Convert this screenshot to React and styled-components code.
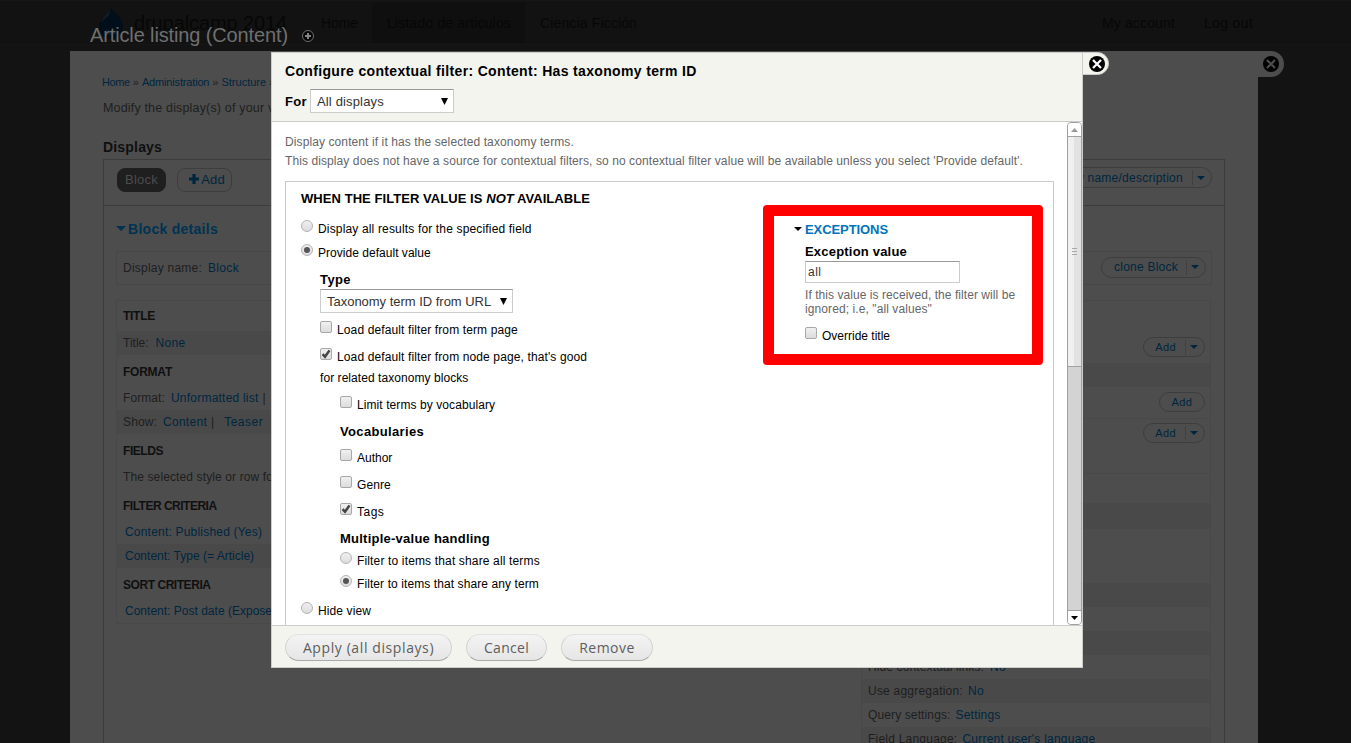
import React from 'react';
import styled, { createGlobalStyle } from 'styled-components';

const Global = createGlobalStyle`
  * { box-sizing: border-box; }
  body { margin: 0; background: #131313; font-family: "Liberation Sans", Arial, sans-serif; font-size: 12px; }
  svg { display: block; flex: none; }
`;

const Stage = styled.div`
  position: relative;
  width: 1351px;
  height: 743px;
  overflow: hidden;
  background: #131313;
`;

const Text = styled.span`
  flex: none;
  white-space: pre;
  font-size: ${p => p.$size || 12}px;
  font-weight: ${p => (p.$bold ? 'bold' : 'normal')};
  letter-spacing: ${p => p.$ls || 0}px;
  color: ${p => p.$color || 'inherit'};
  margin-left: ${p => p.$ml || 0}px;
`;

const Line = styled.div`
  display: flex;
  align-items: center;
  height: ${p => p.$h}px;
  margin-top: ${p => p.$mt || 0}px;
  padding-left: ${p => p.$pl || 0}px;
`;

/* Site navigation */
const SiteHeader = styled.header`
  display: flex;
  align-items: center;
  height: 45px;
  padding: 2px 98px 1px 98px;
  background: #121212;
  border-top: 1px solid #161616;
  border-bottom: 1px solid #161616;
  color: #070707;
`;
const Brand = styled.div`
  display: flex;
  align-items: center;
  width: 208px;
`;
const NavItem = styled.a`
  display: flex;
  align-items: center;
  height: 40px;
  padding: 0 15px;
  background: ${p => (p.$active ? '#0f0f0f' : 'transparent')};
  width: ${p => p.$w}px;
`;
const NavRight = styled.div`
  margin-left: auto;
  display: flex;
`;

/* Administration overlay */
const OverlayTitle = styled.div`
  position: absolute;
  top: 23px;
  left: 90px;
  height: 24px;
  display: flex;
  align-items: center;
  color: #6f6f6f;
`;
const AdminPanel = styled.section`
  position: absolute;
  top: 51px;
  left: 70px;
  width: 1188px;
  height: 700px;
  padding: 18px 33px 0;
  background: #4d4d4d;
  color: #1e1e1e;
`;
const CloseTab = styled.div`
  position: absolute;
  top: ${p => p.$top}px;
  left: 100%;
  width: ${p => p.$w}px;
  height: ${p => p.$h}px;
  padding: ${p => p.$pad};
  background: ${p => p.$bg};
  border-radius: 0 13px 13px 0;
  border: ${p => (p.$line ? `1px solid ${p.$line}` : '0')};
`;
const DisplayBox = styled.div`
  width: 1122px;
  height: 600px;
  margin-top: 2px;
  border: 1px solid #3c3c3c;
`;
const TabsRow = styled.div`
  display: flex;
  align-items: flex-start;
  height: 46px;
  padding: 8px 12px 0 13px;
  border-bottom: 1px solid #3c3c3c;
`;
const Tab = styled.div`
  display: flex;
  align-items: center;
  justify-content: center;
  gap: 2px;
  width: ${p => p.$w}px;
  height: 24px;
  padding: ${p => (p.$active ? '0 0 1px' : '0 0 2px 5px')};
  margin-right: 11px;
  border-radius: 8px;
  border: 1px solid ${p => (p.$active ? '#1f1f1f' : '#3d3d3d')};
  background: ${p => (p.$active ? '#1f1f1f' : 'transparent')};
  color: ${p => (p.$active ? '#4d4d4d' : '#00263f')};
`;
const Pill = styled.div`
  display: flex;
  align-items: center;
  justify-content: ${p => (p.$split ? 'flex-end' : 'center')};
  width: ${p => p.$w}px;
  height: ${p => p.$h || 20}px;
  margin: ${p => p.$m || '0'};
  margin-left: auto;
  padding-right: ${p => (p.$split ? 6 : 0)}px;
  border: 1px solid #3d3d3d;
  border-radius: 11px;
  color: #00263f;
`;
const Divider = styled.i`
  width: 1px;
  height: 15px;
  margin: 0 4px 0 ${p => p.$ml || 9}px;
  background: #414141;
`;
const NameRow = styled.div`
  display: flex;
  align-items: center;
  height: 34px;
  margin: 0 12px;
  padding: 0 5px 0 6px;
  border: 1px solid #474747;
`;
const Columns = styled.div`
  display: flex;
  align-items: flex-start;
  justify-content: space-between;
  margin: 15px 13px 0 12px;
`;
const Column = styled.div`
  width: ${p => p.$w}px;
  border: 1px solid #484848;
`;
const Head = styled.h4`
  margin: 0;
  height: ${p => p.$h || 31}px;
  line-height: ${p => (p.$h ? p.$h - 1 : 31)}px;
  padding: ${p => (p.$h ? 1 : 2)}px 0 0 6px;
  font-size: 12px;
  letter-spacing: ${p => p.$ls}px;
  color: #101010;
`;
const Setting = styled.div`
  display: flex;
  align-items: center;
  height: 24px;
  padding-left: ${p => p.$pl || 6}px;
  background: ${p => (p.$odd ? '#494949' : 'transparent')};
`;
const Band = styled.div`
  display: flex;
  align-items: flex-start;
  height: ${p => p.$h}px;
  padding: ${p => p.$pt || 0}px 5px 0 0;
  background: ${p => (p.$odd ? '#494949' : 'transparent')};
  border-bottom: ${p => (p.$rule ? '1px solid #484848' : '0')};
`;

/* Modal */
const Modal = styled.section`
  position: absolute;
  top: 52px;
  left: 271px;
  width: 812px;
  height: 616px;
  display: flex;
  flex-direction: column;
  background: #fff;
  border: 1px solid #ccc;
  color: #000;
`;
const ModalHead = styled.header`
  height: 69px;
  padding-left: 13px;
  background: #f3f4ee;
  border-bottom: 1px solid #ccc;
`;
const ModalBody = styled.div`
  display: flex;
  height: 503px;
  overflow: hidden;
`;
const Content = styled.div`
  width: 782px;
  margin-right: 13px;
  padding: 10px 0 0 13px;
  overflow: hidden;
`;
const ModalFoot = styled.footer`
  display: flex;
  gap: 14px;
  height: 42px;
  padding: 8px 0 0 13px;
  background: #f3f4ee;
  border-top: 1px solid #ccc;
`;
const SelectBox = styled.div`
  display: flex;
  align-items: center;
  justify-content: space-between;
  width: ${p => p.$w}px;
  height: 24px;
  padding: 0 5px 0 6px;
  background: #fff;
  border: 1px solid #ccc;
  border-top-color: #999;
  color: #333;
`;
const ForLabel = styled.div`
  width: 25px;
`;
const Fieldset = styled.div`
  width: 769px;
  height: 600px;
  margin-top: 11px;
  padding-left: 15px;
  border: 1px solid #ccc;
`;
const Split = styled.div`
  display: flex;
`;
const LeftCol = styled.div`
  width: 493px;
`;
const RightCol = styled.div`
  width: 240px;
`;
const Indent = styled.div`
  padding-left: ${p => p.$by}px;
`;
const CheckMark = styled.span`
  flex: none;
  width: 12px;
  height: 12px;
  margin: 0 5px 5px 0;
  border: 1px solid #a8a8a8;
  border-radius: 2px;
  background: linear-gradient(#f0f0f0, #dcdcdc);
`;
const RadioMark = styled(CheckMark)`
  padding: 2px;
  border-color: #b4b4b4;
  border-radius: 50%;
  &::after {
    content: '';
    display: block;
    width: 6px;
    height: 6px;
    border-radius: 50%;
    background: ${p => (p.$on ? '#555' : 'transparent')};
  }
`;
const TextInput = styled.div`
  display: flex;
  align-items: center;
  width: 155px;
  height: 22px;
  margin: 2px 0 5px;
  padding-left: 2px;
  border: 1px solid #ccc;
  border-top-color: #999;
  color: #333;
`;
const Button = styled.button`
  width: ${p => p.$w}px;
  height: 27px;
  padding: 0;
  border: 1px solid #d2d2d2;
  border-top-color: #e2e2e2;
  border-bottom-color: #aaa;
  border-radius: 14px;
  background: linear-gradient(#f3f3f3, #e6e6e6);
  color: #5e5e5e;
  font: 14px "Open Sans", sans-serif;
  letter-spacing: ${p => p.$ls}px;
`;
const Scrollbar = styled.div`
  display: flex;
  flex-direction: column;
  width: 15px;
  height: 503px;
  border: 1px solid #a0a0a0;
  border-radius: 4px;
  background: #d3d3d3;
  overflow: hidden;
`;
const ScrollButton = styled.div`
  display: flex;
  align-items: center;
  justify-content: center;
  height: 14px;
  background: #fff;
  border: 0 solid #a0a0a0;
  border-top-width: ${p => (p.$end ? 1 : 0)}px;
  border-bottom-width: ${p => (p.$end ? 0 : 1)}px;
  margin-top: ${p => (p.$end ? 'auto' : 0)};
`;
const Thumb = styled.div`
  display: flex;
  flex-direction: column;
  align-items: center;
  justify-content: center;
  gap: 2px;
  height: 230px;
  border-bottom: 1px solid #a0a0a0;
  background: linear-gradient(90deg, #f0f0f0 50%, #e2e2e2 50%);
`;
const Grip = styled.i`
  width: 5px;
  height: 1px;
  background: #a8a8a8;
`;
const Highlight = styled.div`
  position: absolute;
  top: 205px;
  left: 763px;
  width: 280px;
  height: 160px;
  border: 11px solid #f00;
  border-radius: 4px;
`;

const LINK = '#00263f';

const Down = ({ w = 8, h = 4, color = '#000' }) => (
  <svg width={w} height={h} viewBox={`0 0 ${w} ${h}`}>
    <path d={`M0 0H${w}L${w / 2} ${h}Z`} fill={color} />
  </svg>
);
const CloseIcon = ({ cross }) => (
  <svg width="16" height="16" viewBox="0 0 16 16">
    <circle cx="8" cy="8" r="8" fill="#000" />
    <path d="M4 4l8 8M12 4l-8 8" stroke={cross} strokeWidth="2.2" />
  </svg>
);
const Check = ({ on, ls, children }) => (
  <>
    <CheckMark>
      {on && (
        <svg width="10" height="10" viewBox="0 0 10 10">
          <path d="M1.600 5.200L4 7.800L8.500 1.400" fill="none" stroke="#444" strokeWidth="2.500" />
        </svg>
      )}
    </CheckMark>
    <Text $ls={ls}>{children}</Text>
  </>
);
const Radio = ({ on, ls, children }) => (
  <>
    <RadioMark $on={on} />
    <Text $ls={ls}>{children}</Text>
  </>
);
const Select = ({ w, ls, children }) => (
  <SelectBox $w={w}>
    <Text $size={13} $ls={ls}>{children}</Text>
    <Down w={7} h={7} />
  </SelectBox>
);
const AddPill = ({ split, m }) => (
  <Pill $w={split ? 62 : 46} $m={m} $split={split}>
    <Text $size={11} $ls={0.4}>Add</Text>
    {split && <><Divider /><Down color={LINK} /></>}
  </Pill>
);

const DrupalDrop = () => (
  <svg width="26" height="31" viewBox="0 0 26 31">
    <path d="M13 0C15 5 25 9 25 18.500C25 26 20 30.500 13 30.500S1 26 1 18.500C1 10 11 7 13 0Z" fill="#000f1a" />
    <path d="M12 2C9 7 4 9 3 15C8 9 12 8 12 2Z" fill="#161d23" />
    <path d="M6 23C9 20 12 22 14 24C17 21 20 21 21 24C20 28 17 26 14 26C11 28 7 28 6 23Z" fill="#0c1a25" />
  </svg>
);

export default function App() {
  return (
    <Stage>
      <Global />
      <SiteHeader>
        <Brand>
          <DrupalDrop />
          <Text $size={20} $ls={-0.1} $ml={10}>drupalcamp 2014</Text>
        </Brand>
        <NavItem $w={66}><Text $size={14} $ls={-0.1}>Home</Text></NavItem>
        <NavItem $w={153} $active><Text $size={14} $ls={0.17}>Listado de articulos</Text></NavItem>
        <NavItem $w={130}><Text $size={14} $ls={0.14}>Ciencia Ficción</Text></NavItem>
        <NavRight>
          <Text $size={14} $ls={0.14}>My account</Text>
          <Text $size={14} $ls={0.33} $ml={29}>Log out</Text>
        </NavRight>
      </SiteHeader>

      <AdminPanel>
        <CloseTab $top={0} $w={26} $h={26} $pad="5px 0 0 5px" $bg="#4d4d4d"><CloseIcon cross="#4d4d4d" /></CloseTab>
        <Line $h={26}>
          <Text $size={11} $ls={-0.4} $color={LINK} $ml={-1}>Home</Text>
          <Text $size={11} $ml={3}>»</Text>
          <Text $size={11} $ls={-0.16} $color={LINK} $ml={3}>Administration</Text>
          <Text $size={11} $ml={3}>»</Text>
          <Text $size={11} $color={LINK} $ml={3}>Structure</Text>
          <Text $size={11} $ml={3}>»</Text>
        </Line>
        <Line $h={23} $mt={1}><Text $size={12.5} $ls={0.17}>Modify the display(s) of your view below</Text></Line>
        <Line $h={21} $mt={17}><Text $size={14} $bold $ls={0.18} $color="#101010">Displays</Text></Line>
        <DisplayBox>
          <TabsRow>
            <Tab $w={49} $active><Text $size={13} $ls={0.24}>Block</Text></Tab>
            <Tab $w={55}>
              <svg width="10" height="10" viewBox="0 0 10 10"><path d="M5 0V10M0 5H10" stroke={LINK} strokeWidth="3.200" /></svg>
              <Text $size={13} $ls={0.1}>Add</Text>
            </Tab>
            <Pill $w={200} $h={21} $split $m="-1px 0 0">
              <Text $ls={0.26}>edit view name/description</Text><Divider /><Down color={LINK} />
            </Pill>
          </TabsRow>
          <Line $h={45} $pl={12}>
            <Down w={10} h={5} color="#003352" />
            <Text $size={14} $bold $ls={0.28} $ml={2} $color="#003352">Block details</Text>
          </Line>
          <NameRow>
            <Text $ls={0.23}>Display name:</Text>
            <Text $ls={0.33} $ml={6} $color={LINK}>Block</Text>
            <Pill $w={105} $h={21} $split $m="-2px 0 0"><Text $ls={0.24}>clone Block</Text><Divider $ml={8} /><Down color={LINK} /></Pill>
          </NameRow>
          <Columns>
            <Column $w={340}>
              <Head $h={30} $ls={-0.27}>TITLE</Head>
              <Setting $odd><Text>Title:</Text><Text $ls={0.33} $ml={7} $color={LINK}>None</Text></Setting>
              <Head $ls={-0.24}>FORMAT</Head>
              <Setting>
                <Text $ls={0.09}>Format:</Text><Text $ls={0.22} $ml={6} $color={LINK}>Unformatted list</Text><Text $ml={4}>|</Text>
              </Setting>
              <Setting $odd>
                <Text $ls={0.13}>Show:</Text><Text $ls={0.28} $ml={6} $color={LINK}>Content</Text><Text $ml={4}>|</Text>
                <Text $ls={0.5} $ml={10} $color={LINK}>Teaser</Text>
              </Setting>
              <Head $ls={-0.45}>FIELDS</Head>
              <Setting><Text $ls={0.12}>The selected style or row format</Text></Setting>
              <Head $ls={-0.5}>FILTER CRITERIA</Head>
              <Setting $pl={8}><Text $ls={0.2} $color={LINK}>Content: Published (Yes)</Text></Setting>
              <Setting $pl={8} $odd><Text $ls={0.01} $color={LINK}>Content: Type (= Article)</Text></Setting>
              <Head $ls={-0.45}>SORT CRITERIA</Head>
              <Setting $pl={8}><Text $ls={0.01} $color={LINK}>Content: Post date (Exposed)</Text></Setting>
            </Column>
            <Column $w={350}>
              <Band $h={62} $pt={36}><AddPill split /></Band>
              <Band $h={24} $odd />
              <Band $h={32} $pt={5} $rule><AddPill /></Band>
              <Band $h={55} $pt={4} $rule><AddPill split /></Band>
              <Band $h={29} />
              <Band $h={26} $odd />
              <Band $h={54} />
              <Band $h={24} $odd />
              <Band $h={24} />
              <Band $h={24} $odd />
              <Setting><Text $ls={0.12}>Hide contextual links:</Text><Text $ls={0.33} $ml={6} $color={LINK}>No</Text></Setting>
              <Setting $odd><Text $ls={0.22}>Use aggregation:</Text><Text $ls={0.33} $ml={5} $color={LINK}>No</Text></Setting>
              <Setting><Text $ls={0.12}>Query settings:</Text><Text $ls={0.21} $ml={5} $color={LINK}>Settings</Text></Setting>
              <Setting $odd><Text $ls={0.22}>Field Language:</Text><Text $ls={0.23} $ml={5} $color={LINK}>Current user's language</Text></Setting>
            </Column>
          </Columns>
        </DisplayBox>
      </AdminPanel>

      <OverlayTitle>
        <Text $size={20} $ls={-0.13}>Article listing (Content)</Text>
        <svg width="28" height="13" viewBox="-13.500 -0.500 28 13">
          <circle cx="6.5" cy="6.500" r="5.500" fill="#050505" stroke="#6f6f6f" />
          <path d="M6.500 3.500V9.500M3.500 6.500H9.500" stroke="#858585" strokeWidth="2" />
        </svg>
      </OverlayTitle>

      <Modal>
        <CloseTab $top={-1} $w={27} $h={23} $pad="3px 0 0 6px" $bg="#f3f4ee" $line="#ccc"><CloseIcon cross="#fff" /></CloseTab>
        <ModalHead>
          <Line $h={36}><Text $size={14} $bold $ls={0.34}>Configure contextual filter: Content: Has taxonomy term ID</Text></Line>
          <Line $h={24}>
            <ForLabel><Text $size={13} $bold $ls={0.25}>For</Text></ForLabel>
            <Select w={144} ls={0.15}>All displays</Select>
          </Line>
        </ModalHead>
        <ModalBody>
          <Content>
            <Line $h={19}><Text $ls={0.1} $color="#666">Display content if it has the selected taxonomy terms.</Text></Line>
            <Line $h={19}>
              <Text $ls={0.09} $color="#666">This display does not have a source for contextual filters, so no contextual filter value will be available unless you select 'Provide default'.</Text>
            </Line>
            <Fieldset>
              <Line $h={32}><Text $size={13} $bold $ls={0.06}>WHEN THE FILTER VALUE IS <em>NOT</em> AVAILABLE</Text></Line>
              <Split>
                <LeftCol>
                  <Line $h={29}><Radio ls={0.16}>Display all results for the specified field</Radio></Line>
                  <Line $h={19}><Radio on ls={0.03}>Provide default value</Radio></Line>
                  <Indent $by={19}>
                    <Line $h={19} $mt={8}><Text $size={13} $bold $ls={0.4}>Type</Text></Line>
                    <Select w={193} ls={-0.02}>Taxonomy term ID from URL</Select>
                    <Line $h={27} $mt={3}><Check ls={0.12}>Load default filter from term page</Check></Line>
                    <Line $h={27}><Check on ls={0.12}>Load default filter from node page, that's good</Check></Line>
                    <Line $h={15}><Text $ls={0.06}>for related taxonomy blocks</Text></Line>
                    <Indent $by={20}>
                      <Line $h={27} $mt={6}><Check ls={0.08}>Limit terms by vocabulary</Check></Line>
                      <Line $h={26}><Text $size={13} $bold $ls={0.34}>Vocabularies</Text></Line>
                      <Line $h={27}><Check ls={0}>Author</Check></Line>
                      <Line $h={27}><Check ls={0.1}>Genre</Check></Line>
                      <Line $h={27}><Check on ls={0.5}>Tags</Check></Line>
                      <Line $h={27}><Text $size={13} $bold $ls={0.24}>Multiple-value handling</Text></Line>
                      <Line $h={17}><Radio ls={0.15}>Filter to items that share all terms</Radio></Line>
                      <Line $h={23} $mt={3}><Radio on ls={0.09}>Filter to items that share any term</Radio></Line>
                    </Indent>
                  </Indent>
                  <Line $h={31}><Radio ls={0.11}>Hide view</Radio></Line>
                </LeftCol>
                <RightCol>
                  <Line $h={30}>
                    <Down />
                    <Text $size={13} $bold $ls={-0.08} $ml={3} $color="#0074bd">EXCEPTIONS</Text>
                  </Line>
                  <Indent $by={11}>
                    <Line $h={15}><Text $size={13} $bold $ls={0.2}>Exception value</Text></Line>
                    <TextInput><Text $ls={0.5}>all</Text></TextInput>
                    <Line $h={14}><Text $ls={0.06} $color="#666">If this value is received, the filter will be</Text></Line>
                    <Line $h={14}><Text $ls={0.09} $color="#666">ignored; i.e, "all values"</Text></Line>
                    <Line $h={27} $mt={6}><Check ls={0}>Override title</Check></Line>
                  </Indent>
                </RightCol>
              </Split>
            </Fieldset>
          </Content>
          <Scrollbar>
            <ScrollButton>
              <svg width="7" height="4" viewBox="0 0 7 4"><path d="M0 4H7L3.500 0Z" fill="#999" /></svg>
            </ScrollButton>
            <Thumb><Grip /><Grip /><Grip /></Thumb>
            <ScrollButton $end><Down w={7} h={4} /></ScrollButton>
          </Scrollbar>
        </ModalBody>
        <ModalFoot>
          <Button $w={167} $ls={0.6}>Apply (all displays)</Button>
          <Button $w={81} $ls={0.3}>Cancel</Button>
          <Button $w={92} $ls={0.5}>Remove</Button>
        </ModalFoot>
      </Modal>
      <Highlight />
    </Stage>
  );
}
